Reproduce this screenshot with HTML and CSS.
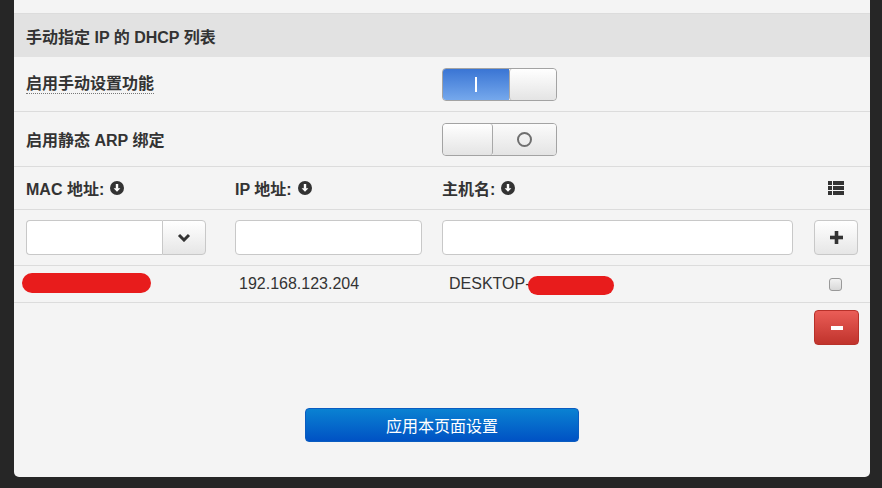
FILE: index.html
```html
<!DOCTYPE html>
<html lang="zh-CN">
<head>
<meta charset="utf-8">
<title>DHCP</title>
<link rel="stylesheet" href="styles.css">
</head>
<body>
<div class="panel">
  <div class="top"></div>
  <div class="section-title">手动指定 IP 的 DHCP 列表</div>

  <div class="grid row setting">
    <div class="label"><span class="dotted">启用手动设置功能</span></div>
    <div></div>
    <div>
      <div class="toggle on">
        <div class="t-blue"><span class="bar"></span></div>
        <div class="t-knob"></div>
      </div>
    </div>
    <div></div>
  </div>

  <div class="grid row setting">
    <div class="label">启用静态 ARP 绑定</div>
    <div></div>
    <div>
      <div class="toggle off">
        <div class="t-knob"></div>
        <div class="t-gray"><span class="ring"></span></div>
      </div>
    </div>
    <div></div>
  </div>

  <div class="grid row colhead">
    <div class="label">MAC 地址: <svg class="ico-down" viewBox="0 0 14 14" width="14" height="14"><circle cx="7" cy="7" r="7" fill="#333"/><rect x="5.8" y="3" width="2.4" height="4.8" fill="#fff"/><polygon points="3.6,7.2 10.4,7.2 7,10.8" fill="#fff"/></svg></div>
    <div class="label">IP 地址: <svg class="ico-down" viewBox="0 0 14 14" width="14" height="14"><circle cx="7" cy="7" r="7" fill="#333"/><rect x="5.8" y="3" width="2.4" height="4.8" fill="#fff"/><polygon points="3.6,7.2 10.4,7.2 7,10.8" fill="#fff"/></svg></div>
    <div class="label">主机名: <svg class="ico-down" viewBox="0 0 14 14" width="14" height="14"><circle cx="7" cy="7" r="7" fill="#333"/><rect x="5.8" y="3" width="2.4" height="4.8" fill="#fff"/><polygon points="3.6,7.2 10.4,7.2 7,10.8" fill="#fff"/></svg></div>
    <div class="center">
      <svg viewBox="0 0 16 14" width="16" height="14"><rect x="0" y="0" width="4" height="4" fill="#333"/><rect x="5" y="0" width="11" height="4" fill="#333"/><rect x="0" y="5" width="4" height="4" fill="#333"/><rect x="5" y="5" width="11" height="4" fill="#333"/><rect x="0" y="10" width="4" height="4" fill="#333"/><rect x="5" y="10" width="11" height="4" fill="#333"/></svg>
    </div>
  </div>

  <div class="grid row inputs">
    <div>
      <div class="input-group">
        <input class="field mac" type="text">
        <button class="dd-btn" type="button"><svg viewBox="0 0 14 9" width="14" height="9"><path d="M2 2 L7 7 L12 2" stroke="#333" stroke-width="3" fill="none"/></svg></button>
      </div>
    </div>
    <div><input class="field ip" type="text"></div>
    <div><input class="field host" type="text"></div>
    <div><button class="btn-plus" type="button"><svg viewBox="0 0 13 13" width="13" height="13"><rect x="4.7" y="0" width="3.6" height="13" fill="#333"/><rect x="0" y="4.7" width="13" height="3.6" fill="#333"/></svg></button></div>
  </div>

  <div class="grid row data">
    <div><span class="redact r1"></span></div>
    <div class="cell ipcell">192.168.123.204</div>
    <div class="cell hostcell">DESKTOP-<span class="redact r2"></span></div>
    <div class="center"><span class="check"></span></div>
  </div>

  <div class="grid minus-row">
    <div></div><div></div><div></div>
    <div><button class="btn-minus" type="button"><span class="mbar"></span></button></div>
  </div>

  <div class="apply-wrap">
    <button class="btn-apply" type="button">应用本页面设置</button>
  </div>
</div>
</body>
</html>
```

FILE: styles.css
```css
html, body {
  margin: 0;
  padding: 0;
  background: #262626;
  height: 488px;
  overflow: hidden;
}

body {
  font-family: "Liberation Sans", "Noto Sans CJK SC", sans-serif;
  font-size: 16px;
  color: #333;
}

.panel {
  margin-left: 14px;
  width: 856px;
  height: 477px;
  background: #f4f4f4;
  border-radius: 0 0 5px 5px;
  box-sizing: border-box;
}

.top {
  height: 14px;
  border-bottom: 1px solid #dcdcdc;
  box-sizing: border-box;
}

.section-title {
  height: 43px;
  background: #e2e2e2;
  padding-left: 12px;
  display: flex;
  align-items: center;
  font-weight: bold;
  font-size: 16px;
  color: #333;
}

.grid {
  display: grid;
  grid-template-columns: 209px 207px 372px 44px;
  padding: 0 12px;
  align-items: center;
}

.row {
  border-bottom: 1px solid #dcdcdc;
  box-sizing: border-box;
}

.setting { height: 55px; }
.colhead { height: 43px; }
.inputs { height: 56px; }
.data { height: 37px; }

.label {
  font-weight: bold;
  display: flex;
  align-items: center;
  gap: 6px;
  white-space: nowrap;
}

.dotted {
  border-bottom: 1px dotted #777;
  line-height: 19px;
}

.center {
  display: flex;
  justify-content: center;
  align-items: center;
}

.ico-down { flex: none; margin-top: -1px; }

/* toggles */
.toggle {
  width: 115px;
  height: 33px;
  box-sizing: border-box;
  border: 1px solid #a3a3a3;
  border-radius: 4px;
  display: flex;
  overflow: hidden;
}

.t-blue {
  width: 66px;
  background: linear-gradient(#3a75d4, #75a8ec);
  display: flex;
  align-items: center;
  justify-content: center;
}

.t-blue .bar {
  width: 2px;
  height: 15px;
  background: #fff;
}

.t-knob {
  flex: 1;
  background: linear-gradient(#ffffff, #e4e4e4);
  border-left: 1px solid #a8a8a8;
  border-right: 1px solid #a8a8a8;
  border-radius: 3px;
}

.toggle.on .t-knob { border-right: none; }

.toggle.off .t-knob {
  flex: none;
  width: 49px;
  border-left: none;
}

.t-gray {
  flex: 1;
  background: linear-gradient(#fbfbfb, #e4e4e4);
  display: flex;
  align-items: center;
  justify-content: center;
}

.t-gray .ring {
  width: 11px;
  height: 11px;
  border: 2px solid #6f6f6f;
  border-radius: 50%;
}

/* inputs */
.input-group {
  display: flex;
  width: 180px;
  height: 35px;
}

.field {
  box-sizing: border-box;
  height: 35px;
  border: 1px solid #c8c8c8;
  border-radius: 4px;
  background: #fff;
  margin: 0;
  padding: 0 6px;
  font: inherit;
}

.field.mac {
  width: 136px;
  border-radius: 4px 0 0 4px;
  border-right: none;
}

.field.ip { width: 187px; }
.field.host { width: 351px; }

.dd-btn {
  width: 44px;
  height: 35px;
  box-sizing: border-box;
  border: 1px solid #c8c8c8;
  border-radius: 0 4px 4px 0;
  background: linear-gradient(#ffffff, #e6e6e6);
  display: flex;
  align-items: center;
  justify-content: center;
  padding: 0;
  margin: 0;
}

.btn-plus {
  width: 44px;
  height: 35px;
  box-sizing: border-box;
  border: 1px solid #c8c8c8;
  border-radius: 4px;
  background: linear-gradient(#ffffff, #e6e6e6);
  display: flex;
  align-items: center;
  justify-content: center;
  padding: 0;
  margin: 0;
}

/* data row */
.cell {
  font-size: 16px;
  color: #333;
  white-space: nowrap;
  display: flex;
  align-items: center;
}

.ipcell { padding-left: 4px; }
.hostcell { padding-left: 7px; }

.redact {
  display: inline-block;
  background: #e81c1c;
  border-radius: 10px;
}

.r1 {
  width: 129px;
  height: 20px;
  margin-left: -4px;
  margin-top: 1px;
}

.r2 {
  width: 86px;
  height: 19px;
  margin-left: -3px;
  margin-top: 2px;
}

.check {
  width: 13px;
  height: 13px;
  box-sizing: border-box;
  border: 1px solid #999;
  border-radius: 3px;
  background: linear-gradient(#f2f2f2, #d8d8d8);
  margin-left: -1px;
}

/* minus */
.minus-row { padding-top: 7px; }

.btn-minus {
  width: 45px;
  height: 35px;
  box-sizing: border-box;
  border: 1px solid #b8312a;
  border-radius: 4px;
  background: linear-gradient(#ea5d57, #c0332c);
  display: flex;
  align-items: center;
  justify-content: center;
  padding: 0;
  margin: 0;
}

.mbar {
  width: 12px;
  height: 4px;
  background: #fff;
}

/* apply */
.apply-wrap {
  margin-top: 63px;
  padding-left: 291px;
}

.btn-apply {
  width: 274px;
  height: 34px;
  border: 1px solid #0a5cc0;
  border-radius: 4px;
  background: linear-gradient(#0a82d2, #0052c4);
  color: #fff;
  font-family: "Liberation Sans", "Noto Sans CJK SC", sans-serif;
  font-size: 16px;
  padding: 0;
  margin: 0;
}
```
